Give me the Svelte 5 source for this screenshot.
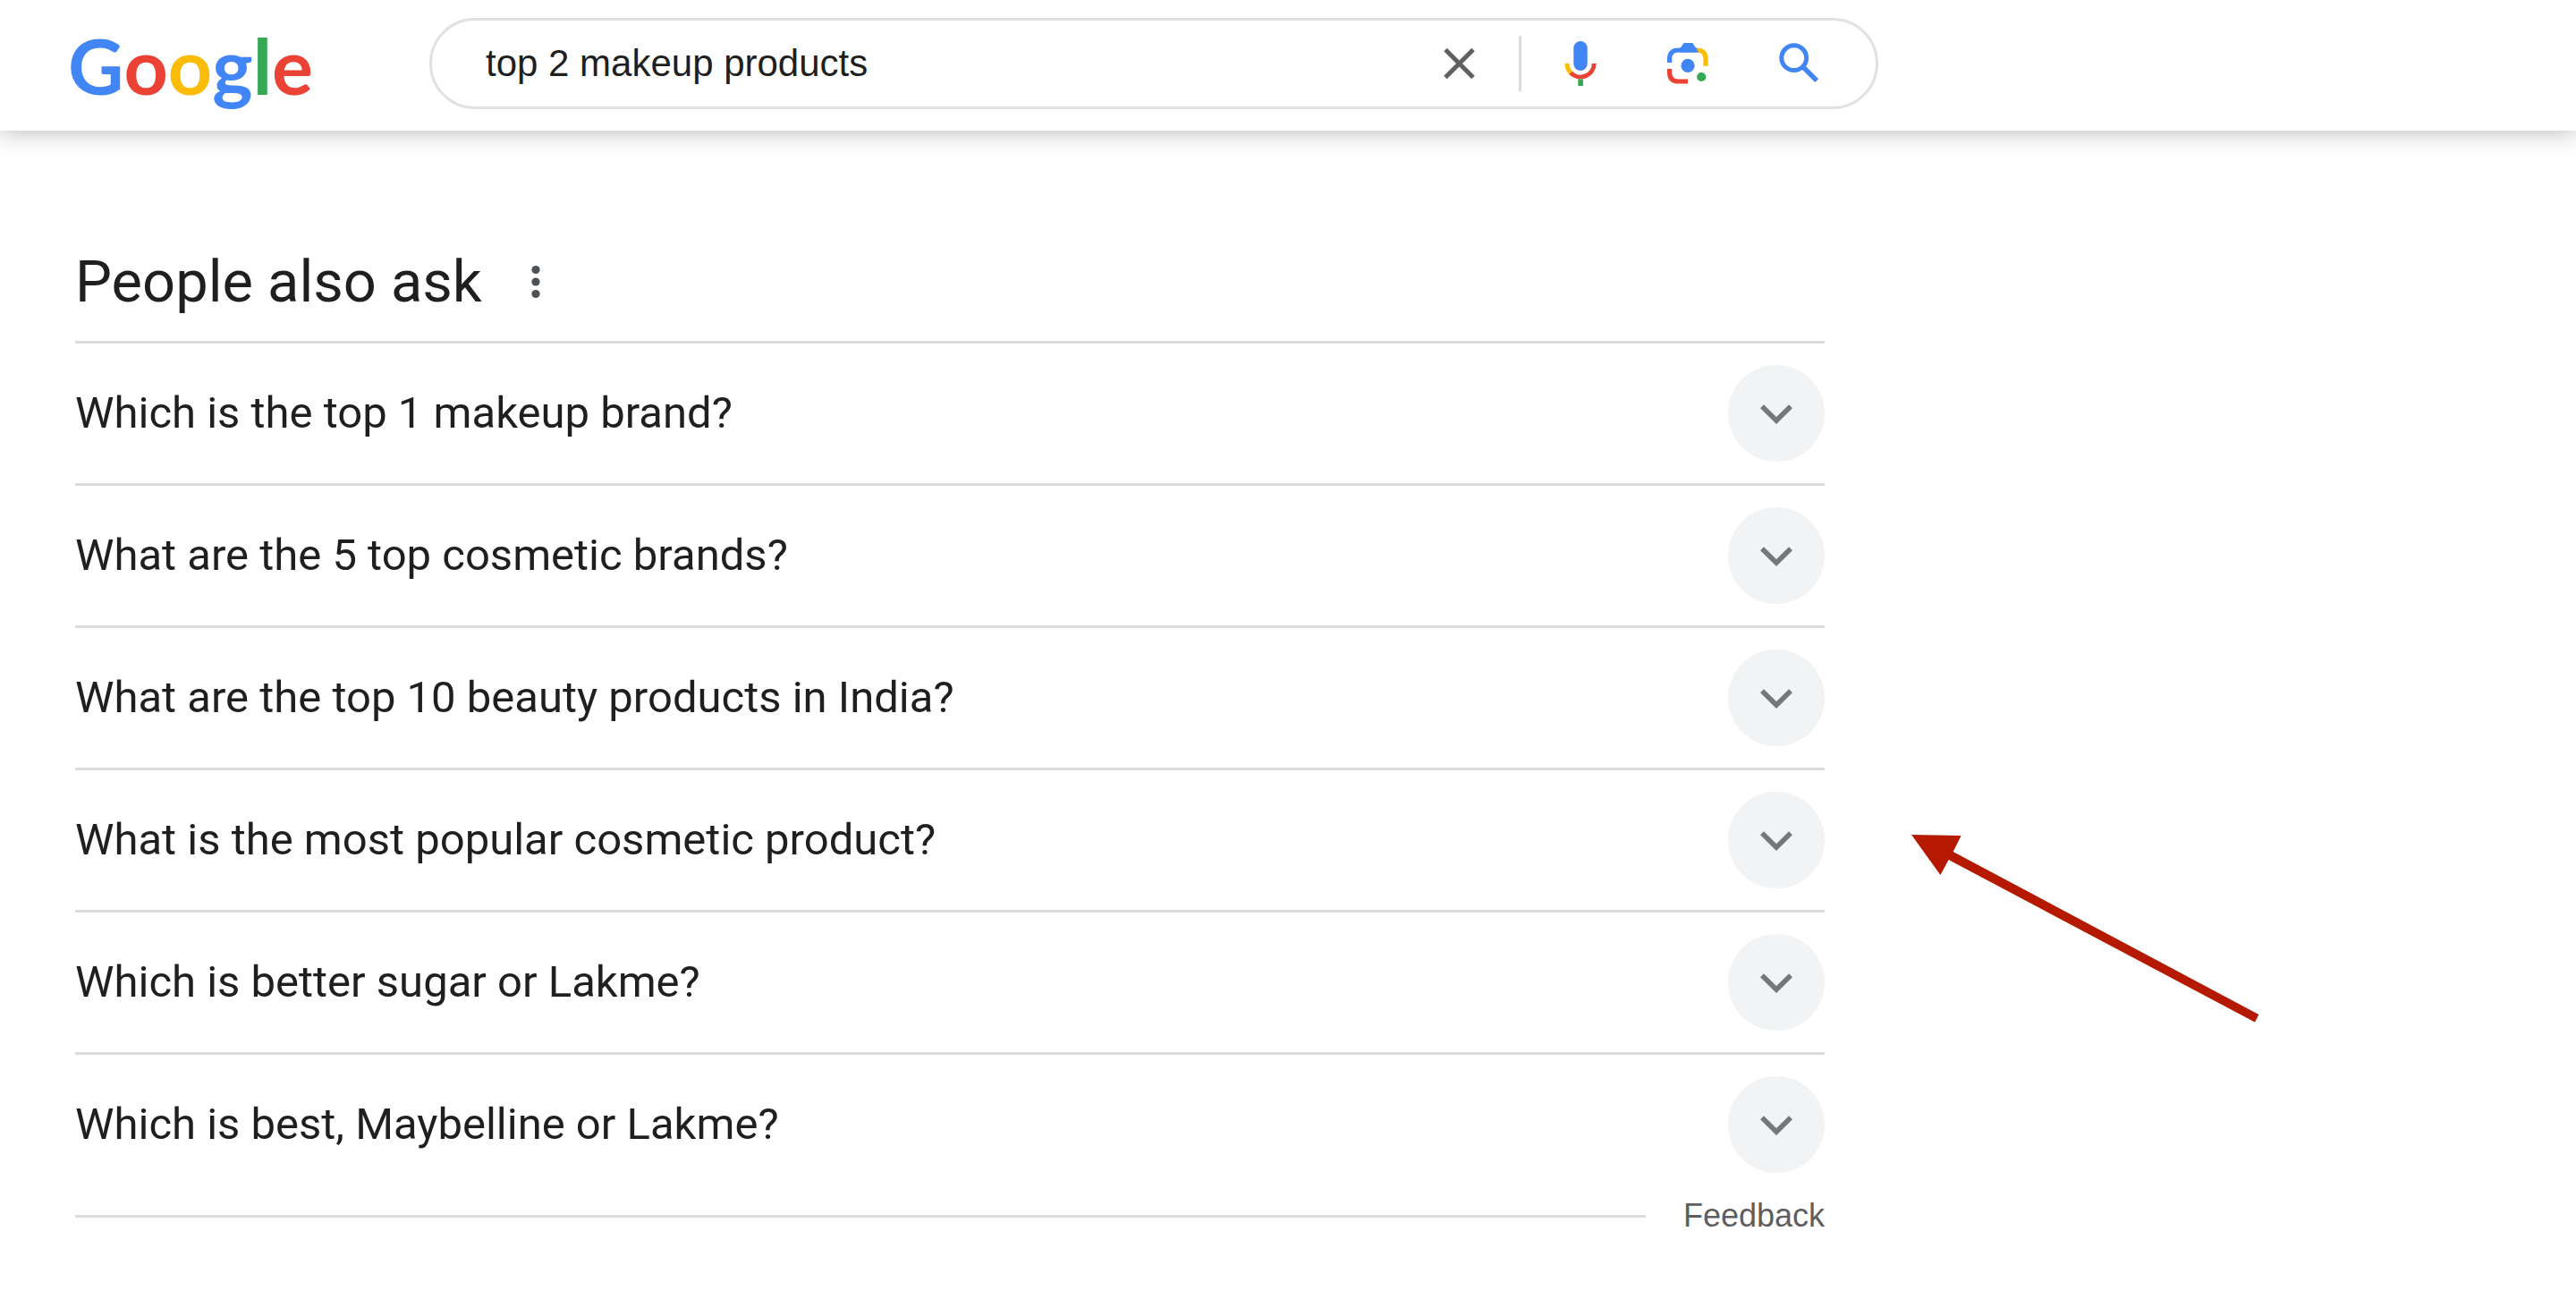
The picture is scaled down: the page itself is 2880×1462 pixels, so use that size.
<script>
    let query = "top 2 makeup products";

    const questions = [
        "Which is the top 1 makeup brand?",
        "What are the 5 top cosmetic brands?",
        "What are the top 10 beauty products in India?",
        "What is the most popular cosmetic product?",
        "Which is better sugar or Lakme?",
        "Which is best, Maybelline or Lakme?",
    ];
</script>

<header>
    <a class="logo" href="#home" aria-label="Google">
        <span class="blue">G</span><span class="red">o</span><span class="yellow">o</span><span class="blue">g</span><span class="green">l</span><span class="red">e</span>
    </a>

    <form class="search" role="search" on:submit|preventDefault>
        <input type="text" aria-label="Search" bind:value={query} />
        <button type="button" class="clear" aria-label="Clear" on:click={() => (query = "")}>
            <svg viewBox="0 0 72 72">
                <path d="M20 20.5 51 51.5M51 20.5 20 51.5" fill="none" stroke="#5f6061" stroke-width="5" />
            </svg>
        </button>
        <span class="divider"></span>
        <div class="tools">
            <button type="button" aria-label="Search by voice">
                <svg viewBox="0 0 72 72" fill="none" stroke-width="5">
                    <rect x="31.3" y="11" width="15.4" height="33" rx="7.7" fill="#4285f4" />
                    <path d="M24 36a15.2 15.2 0 0 0 4.6 10.9" stroke="#fbbc04" />
                    <path d="M28.2 46.5A15.2 15.2 0 0 0 54.2 36" stroke="#ea4335" />
                    <path d="M39.1 53.4V61" stroke="#34a853" stroke-width="5.6" />
                </svg>
            </button>
            <button type="button" aria-label="Search by image">
                <svg viewBox="0 0 72 72" fill="none" stroke-width="5.2">
                    <path d="M46 21q10 0 10 10v7.7" stroke="#fbbc04" />
                    <path d="M15.6 35v-4q0-10 10-10H46" stroke="#4285f4" />
                    <path d="M27 19.5 31.7 13h9.6L48.3 23.6H27z" fill="#4285f4" />
                    <path d="M15.6 42v4q0 10 10 10H36" stroke="#ea4335" />
                    <circle cx="36" cy="38.4" r="7.6" fill="#4285f4" />
                    <circle cx="51.2" cy="51" r="5.1" fill="#34a853" />
                </svg>
            </button>
            <button type="submit" aria-label="Google Search">
                <svg viewBox="0 0 72 72" fill="none" stroke="#4285f4">
                    <circle cx="31.7" cy="29.7" r="13.9" stroke-width="5" />
                    <path d="M42.5 40.5 57.2 55.2" stroke-width="5.4" />
                </svg>
            </button>
        </div>
    </form>
</header>

<main>
    <div class="heading">
        <h2>People also ask</h2>
        <button type="button" class="more" aria-label="About this result">
            <svg viewBox="0 0 72 72" fill="#4d5156">
                <circle cx="36" cy="22.5" r="4.6" />
                <circle cx="36" cy="36" r="4.6" />
                <circle cx="36" cy="49.5" r="4.6" />
            </svg>
        </button>
    </div>

    <ul>
        {#each questions as question}
            <li>
                <button type="button" class="question" aria-expanded="false">
                    <span>{question}</span>
                    <svg class="chevron" viewBox="0 0 108 108">
                        <path d="M38 46.2 54 62 70 46.2" fill="none" stroke="#747878" stroke-width="5.6" />
                    </svg>
                </button>
            </li>
        {/each}
    </ul>

    <div class="feedback">
        <a href="#feedback">Feedback</a>
    </div>

    <svg class="arrow" viewBox="0 0 390 210" fill="#b51a00" aria-hidden="true">
        <path d="M0 0 55.6 1 46.6 19 388.4 201 384 209.4 41.6 28 32.4 45z" />
    </svg>
</main>

<style>
    :global(body) {
        margin: 0;
        background: #fff;
        color: #1f1f1f;
        font-family: "Liberation Sans", Arial, sans-serif;
    }

    button {
        padding: 0;
        border: 0;
        background: none;
        color: inherit;
        cursor: pointer;
    }

    svg {
        display: block;
    }

    header {
        display: flex;
        align-items: flex-start;
        box-sizing: border-box;
        min-height: 146px;
        padding: 20px 76px;
        box-shadow: 0 3px 24px rgba(0, 0, 0, 0.25);
    }

    .logo {
        display: flex;
        flex: none;
        width: 404px;
        font-family: Lato, sans-serif;
        font-size: 86px;
        font-weight: 700;
        line-height: 106px;
        text-decoration: none;
    }

    .blue {
        color: #4285f4;
    }

    .red {
        color: #ea4335;
    }

    .yellow {
        color: #fbbc05;
    }

    .green {
        color: #34a853;
    }

    .search {
        display: flex;
        flex: 1;
        align-items: center;
        box-sizing: border-box;
        max-width: 1620px;
        height: 102px;
        padding: 0 51px 0 60px;
        border: 3px solid #dfe1e5;
        border-radius: 51px;
    }

    .search input {
        flex: 1;
        min-width: 0;
        padding: 0;
        border: 0;
        outline: 0;
        background: none;
        color: #1f1f1f;
        font: 42px "Liberation Sans", Arial, sans-serif;
    }

    .search svg,
    .more svg {
        width: 72px;
        height: 72px;
    }

    .divider {
        width: 3px;
        height: 62px;
        margin: 0 27px 0 30px;
        background: #dadce0;
    }

    .tools {
        display: flex;
        gap: 51px;
    }

    main {
        position: relative;
        max-width: 1956px;
        padding: 133px 84px 0;
    }

    .heading {
        display: flex;
        align-items: center;
        gap: 24px;
        height: 72px;
        margin-bottom: 30px;
    }

    h2 {
        margin: 0;
        font-family: Roboto, sans-serif;
        font-size: 65px;
        font-weight: 400;
        line-height: 72px;
    }

    ul {
        margin: 0;
        padding: 0;
        list-style: none;
    }

    li {
        border-top: 3px solid #dadce0;
    }

    .question {
        display: flex;
        align-items: center;
        justify-content: space-between;
        width: 100%;
        padding: 24px 0;
        font-family: Roboto, sans-serif;
        font-size: 49px;
        line-height: 60px;
        text-align: left;
    }

    .chevron {
        flex: none;
        width: 108px;
        height: 108px;
        border-radius: 50%;
        background: #f1f3f4;
    }

    .feedback {
        display: flex;
        align-items: center;
        gap: 42px;
        margin-top: 3px;
    }

    .feedback::before {
        content: "";
        flex: 1;
        height: 3px;
        background: #dadce0;
    }

    .feedback a {
        color: #5e5e5e;
        font-size: 36px;
        line-height: 42px;
        text-decoration: none;
    }

    .arrow {
        position: absolute;
        top: 787px;
        left: 100%;
        width: 390px;
        height: 210px;
        margin-left: 13px;
    }
</style>
